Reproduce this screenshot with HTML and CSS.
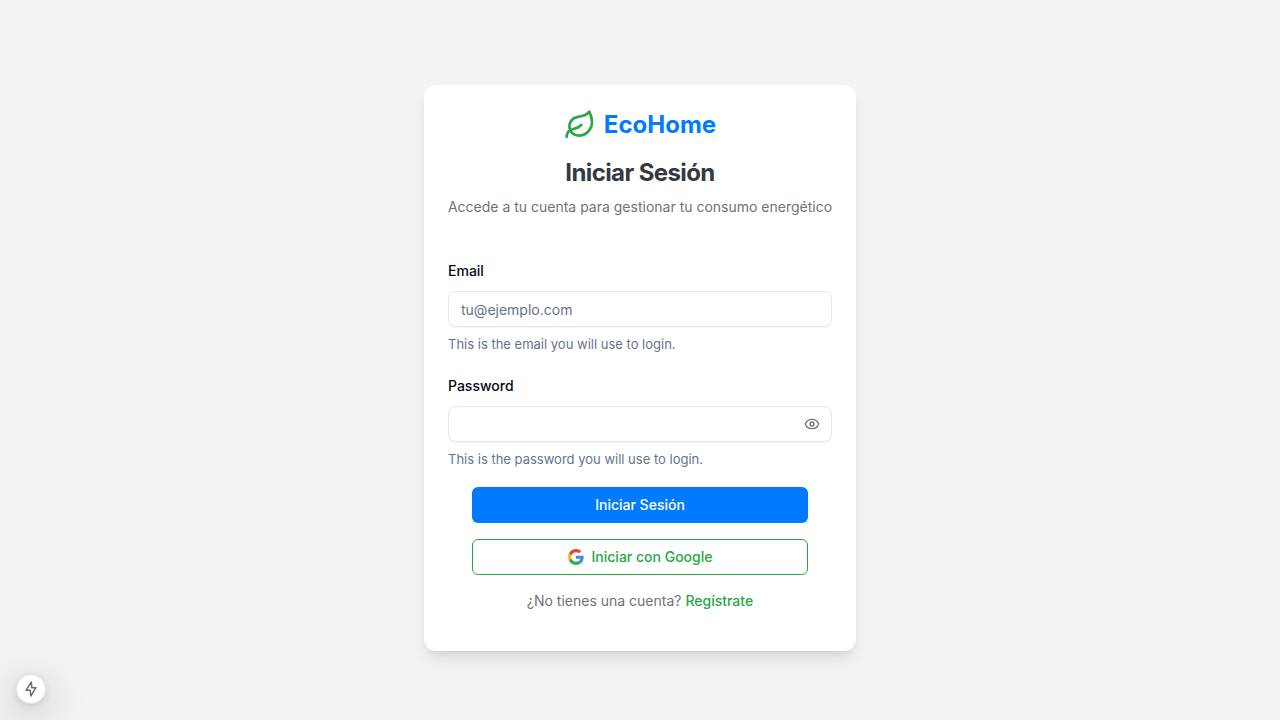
FILE: index.html
```html
<!DOCTYPE html>
<html lang="es">
<head>
<meta charset="utf-8">
<meta name="viewport" content="width=device-width, initial-scale=1">
<title>EcoHome - Iniciar Sesión</title>
<link rel="stylesheet" href="styles.css">
</head>
<body>
<main class="page">
  <section class="card">
    <header class="card-header">
      <div class="brand">
        <svg class="brand-icon" viewBox="0 0 24 24" aria-hidden="true"><path d="M11 20A7 7 0 0 1 9.8 6.1C15.5 5 17 4.48 19 2c1 2 2 4.18 2 8 0 5.5-4.78 10-10 10Z"/><path d="M2 21c0-3 1.85-5.36 5.08-6C9.5 14.52 12 13 13 12"/></svg>
        <span class="brand-name">EcoHome</span>
      </div>
      <h1 class="title">Iniciar Sesión</h1>
      <p class="subtitle">Accede a tu cuenta para gestionar tu consumo energético</p>
    </header>
    <form class="form">
      <div class="fields">
        <div class="field">
          <label class="label" for="email">Email</label>
          <input class="input" id="email" type="email" placeholder="tu@ejemplo.com">
          <p class="hint">This is the email you will use to login.</p>
        </div>
        <div class="field">
          <label class="label" for="password">Password</label>
          <div class="password">
            <input class="input" id="password" type="password">
            <button class="reveal" type="button" aria-label="Mostrar contraseña">
              <svg class="reveal-icon" viewBox="0 0 24 24" aria-hidden="true"><path d="M2.062 12.348a1 1 0 0 1 0-.696 10.75 10.75 0 0 1 19.876 0 1 1 0 0 1 0 .696 10.75 10.75 0 0 1-19.876 0"/><circle cx="12" cy="12" r="3"/></svg>
            </button>
          </div>
          <p class="hint">This is the password you will use to login.</p>
        </div>
      </div>
      <div class="actions">
        <button class="button button-primary" type="submit">Iniciar Sesión</button>
        <button class="button button-outline" type="button">
          <svg class="google-icon" viewBox="0 0 48 48" aria-hidden="true"><path fill="#EA4335" d="M24 9.5c3.54 0 6.71 1.22 9.21 3.6l6.85-6.85C35.9 2.38 30.47 0 24 0 14.62 0 6.51 5.38 2.56 13.22l7.98 6.19C12.43 13.72 17.74 9.5 24 9.5z"/><path fill="#4285F4" d="M46.98 24.55c0-1.57-.15-3.09-.38-4.55H24v9.02h12.94c-.58 2.96-2.26 5.48-4.78 7.18l7.73 6c4.51-4.18 7.09-10.36 7.09-17.65z"/><path fill="#FBBC05" d="M10.53 28.59c-.48-1.45-.76-2.99-.76-4.59s.27-3.14.76-4.59l-7.98-6.19C.92 16.46 0 20.12 0 24c0 3.88.92 7.54 2.56 10.78l7.97-6.19z"/><path fill="#34A853" d="M24 48c6.48 0 11.93-2.13 15.89-5.81l-7.73-6c-2.15 1.45-4.92 2.3-8.16 2.3-6.26 0-11.57-4.22-13.47-9.91l-7.98 6.19C6.51 42.62 14.62 48 24 48z"/></svg>
          Iniciar con Google
        </button>
      </div>
      <p class="signup">¿No tienes una cuenta? <a class="signup-link" href="#">Regístrate</a></p>
    </form>
  </section>
</main>
<button class="dev-badge" type="button" aria-label="Estado">
  <svg class="dev-icon" viewBox="0 0 16 16" aria-hidden="true"><path d="M8.3 1 3 9.3h4.2V9.3L7.8 15 13 6.7H8.8z"/></svg>
</button>
</body>
</html>
```
FILE: styles.css
```css
* { box-sizing: border-box; }
body, h1, p { margin: 0; }
body {
  font-family: Inter, "Liberation Sans", sans-serif;
  font-size: 14px;
  line-height: 20px;
  color: #020817;
  background: #f1f3f5;
}
button, input { font: inherit; }
.page {
  min-height: 100vh;
  display: flex;
  align-items: center;
  justify-content: center;
  padding: 32px 16px 16px;
}
.card {
  width: 100%;
  max-width: 432px;
  background: #fff;
  border-radius: 12px;
  box-shadow: 0 10px 15px -3px rgb(0 0 0 / 0.1), 0 4px 6px -4px rgb(0 0 0 / 0.1);
}
.card-header {
  display: flex;
  flex-direction: column;
  align-items: center;
  padding: 24px;
  text-align: center;
}
.brand {
  display: flex;
  align-items: center;
  justify-content: center;
  gap: 8px;
  margin-bottom: 16px;
}
.brand-icon {
  width: 32px;
  height: 32px;
  fill: none;
  stroke: #28a745;
  stroke-width: 2;
  stroke-linecap: round;
  stroke-linejoin: round;
}
.brand-name { font-size: 24px; line-height: 32px; font-weight: 700; color: #007bff; }
.title {
  font-size: 24px;
  line-height: 32px;
  font-weight: 700;
  letter-spacing: -0.025em;
  color: #343a40;
}
.subtitle { margin-top: 8px; color: #6f7377; }
.form { padding: 18px 24px 24px; }
.fields { display: grid; gap: 20px; margin-bottom: 18px; }
.field { display: grid; gap: 8px; }
.label { font-weight: 500; line-height: 24px; }
.input {
  width: 100%;
  height: 36px;
  padding: 4px 12px;
  color: inherit;
  background: transparent;
  border: 1px solid #e2e8f0;
  border-radius: 8px;
  box-shadow: 0 1px 2px rgb(0 0 0 / 0.05);
}
.input::placeholder { color: #64748b; opacity: 1; }
.hint { font-size: 13px; line-height: 19px; color: #64748b; }
.password { position: relative; height: 36px; }
.reveal {
  position: absolute;
  inset: 0 0 0 auto;
  width: 40px;
  display: flex;
  align-items: center;
  justify-content: center;
  padding: 0;
  border: 0;
  background: transparent;
}
.reveal-icon {
  width: 16px;
  height: 16px;
  fill: none;
  stroke: #6b7280;
  stroke-width: 2;
  stroke-linecap: round;
  stroke-linejoin: round;
}
.actions { display: grid; gap: 16px; padding: 0 24px; }
.button {
  display: flex;
  align-items: center;
  justify-content: center;
  gap: 8px;
  height: 36px;
  padding: 0 16px;
  border: 1px solid transparent;
  border-radius: 6px;
  font-weight: 500;
}
.button-primary { background: #007bff; color: #fff; }
.button-outline { background: #fff; border-color: #28a745; color: #28a745; }
.google-icon { width: 16px; height: 16px; }
.signup { margin: 16px 0; text-align: center; color: #6f7377; }
.signup-link { color: #28a745; font-weight: 500; text-decoration: none; }
.dev-badge {
  position: fixed;
  left: 16px;
  bottom: 16px;
  width: 30px;
  height: 30px;
  display: flex;
  align-items: center;
  justify-content: center;
  padding: 0;
  border: 1px solid #e5e5e5;
  border-radius: 50%;
  background: #fff;
  box-shadow: 0 11px 40px rgb(0 0 0 / 0.25), 0 2px 10px rgb(0 0 0 / 0.12);
}
.dev-icon { width: 16px; height: 16px; fill: none; stroke: #707070; stroke-width: 1.5; stroke-linejoin: round; }
@media (min-width: 480px) {
  .subtitle { white-space: nowrap; }
}
```
